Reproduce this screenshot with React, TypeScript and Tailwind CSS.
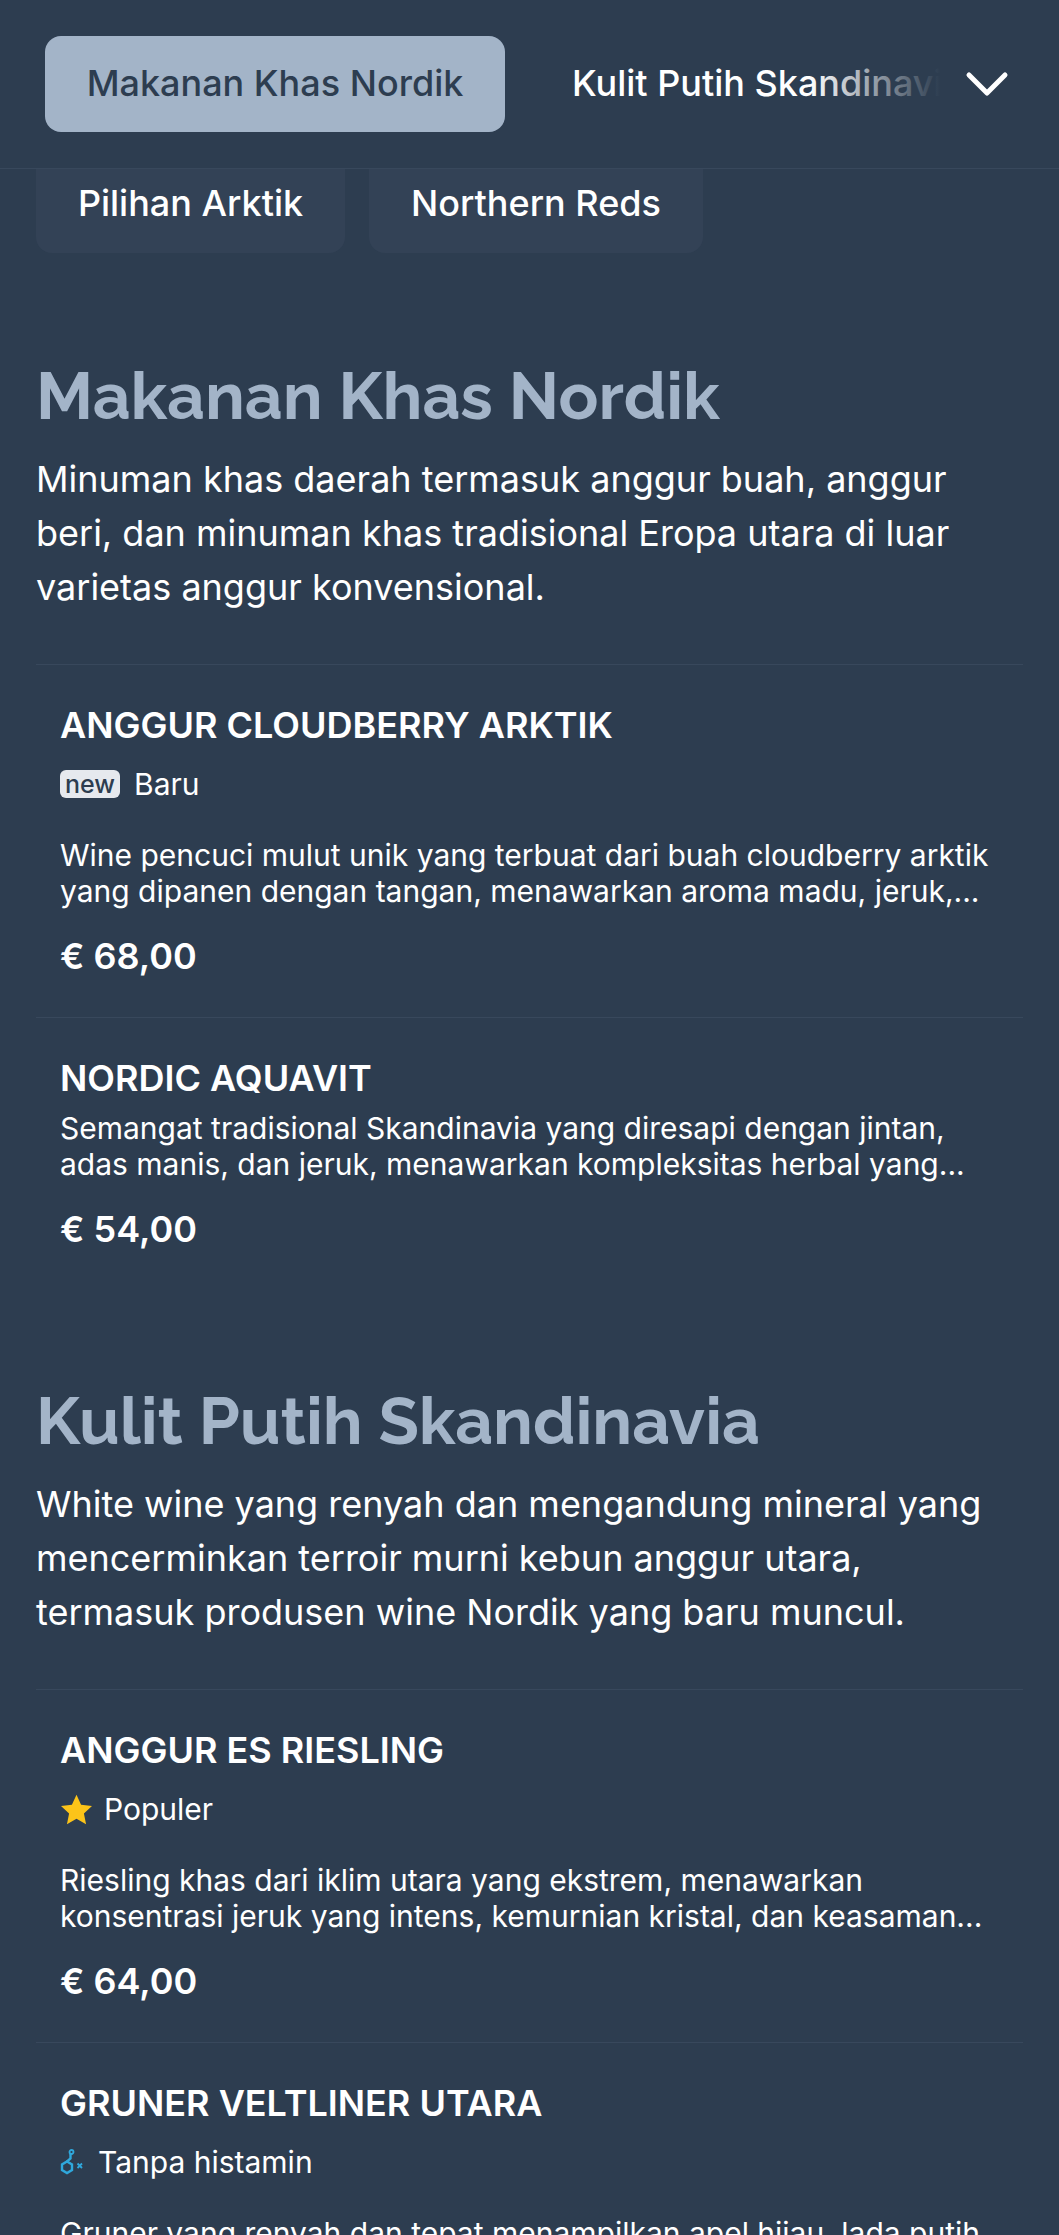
const headingFont = "font-['Raleway','Lato','Inter',sans-serif]";

type Item = {
  name: string;
  tag?: "new" | "star" | "histamine";
  tagLabel?: string;
  desc: string;
  price?: string;
};

const nordic: Item[] = [
  {
    name: "ANGGUR CLOUDBERRY ARKTIK",
    tag: "new",
    tagLabel: "Baru",
    desc: "Wine pencuci mulut unik yang terbuat dari buah cloudberry arktik yang dipanen dengan tangan, menawarkan aroma madu, jeruk,...",
    price: "€ 68,00",
  },
  {
    name: "NORDIC AQUAVIT",
    desc: "Semangat tradisional Skandinavia yang diresapi dengan jintan, adas manis, dan jeruk, menawarkan kompleksitas herbal yang...",
    price: "€ 54,00",
  },
];

const whites: Item[] = [
  {
    name: "ANGGUR ES RIESLING",
    tag: "star",
    tagLabel: "Populer",
    desc: "Riesling khas dari iklim utara yang ekstrem, menawarkan konsentrasi jeruk yang intens, kemurnian kristal, dan keasaman...",
    price: "€ 64,00",
  },
  {
    name: "GRUNER VELTLINER UTARA",
    tag: "histamine",
    tagLabel: "Tanpa histamin",
    desc: "Gruner yang renyah dan tepat menampilkan apel hijau, lada putih, dan mineralitas yang...",
  },
];

function HistamineIcon() {
  return (
    <svg width="24" height="26" viewBox="0 0 24 26" fill="none" stroke="#2fa8dc" strokeWidth="2.4">
      <path d="M7 12.5 12 15.5V21L7 24 2 21V15.5Z" />
      <path d="M7 12.5 10.5 9.5V5" />
      <circle cx="11.5" cy="3" r="2" strokeWidth="1.8" />
      <path d="M17.5 14.5 22 19M22 14.5 17.5 19" strokeWidth="1.8" />
    </svg>
  );
}

function Tag({ item }: { item: Item }) {
  if (!item.tag) {
    return null;
  }

  return (
    <div className="mt-[19px] mb-[35px] flex h-[36px] items-center text-[30px] text-white">
      {item.tag === "new" ? (
        <span className="mr-[14px] flex h-[28px] w-[60px] items-center justify-center rounded-[6px] bg-[#e6e9ee] text-[25px] leading-none font-medium text-[#2d3d50]">
          new
        </span>
      ) : null}
      {item.tag === "star" ? (
        <svg width="33" height="31" viewBox="0 0 24 23" className="mr-[11px]" fill="#fcc419">
          <path d="M12 0.5 15.4 8 23.5 8.9 17.5 14.4 19.1 22.4 12 18.4 4.9 22.4 6.5 14.4 0.5 8.9 8.6 8Z" />
        </svg>
      ) : null}
      {item.tag === "histamine" ? (
        <span className="mr-[14px]">
          <HistamineIcon />
        </span>
      ) : null}
      <span>{item.tagLabel}</span>
    </div>
  );
}

function MenuItem({ item }: { item: Item }) {
  return (
    <article className="border-t border-[#38485c] px-[24px] pt-[39px] pb-[39px]">
      <h3 className="mb-[10px] text-[36px] leading-[43px] font-semibold text-white">{item.name}</h3>
      <Tag item={item} />
      <p className="text-[30px] leading-[36px] text-white">{item.desc}</p>
      {item.price ? (
        <p className="mt-[25px] text-[36px] leading-[44px] font-semibold text-white">{item.price}</p>
      ) : null}
    </article>
  );
}

function Section({ title, intro, items }: { title: string; intro: string; items: Item[] }) {
  return (
    <section className="mb-[91px]">
      <h2 className={`text-[66px] leading-[80px] font-bold text-[#a3b4c8] ${headingFont}`}>{title}</h2>
      <p className="mt-[16px] mb-[50px] text-[36px] leading-[54px] text-white">{intro}</p>
      {items.map((item) => (
        <MenuItem key={item.name} item={item} />
      ))}
    </section>
  );
}

export default function App() {
  return (
    <div className="h-[2235px] overflow-hidden bg-[#2d3d50] font-['Inter',sans-serif]">
      <header className="flex h-[169px] items-center border-b border-[#38485c] pb-[1px]">
        <div className="ml-[45px] flex h-[96px] w-[460px] items-center justify-center rounded-[16px] bg-[#a3b4c8] pb-[2px] text-[36px] font-medium text-[#2d3d50]">
          Makanan Khas Nordik
        </div>
        <div className="relative mb-[2px] ml-[67px] w-[368px] overflow-hidden text-[36px] font-medium whitespace-nowrap text-white">
          Kulit Putih Skandinavia
          <span className="absolute inset-y-0 right-0 w-[130px] bg-gradient-to-r from-transparent to-[#2d3d50]" />
        </div>
        <svg width="46" height="30" viewBox="0 0 46 30" fill="none" className="ml-[24px]">
          <path d="M5 6 23 24 41 6" stroke="white" strokeWidth="5" strokeLinecap="round" strokeLinejoin="round" />
        </svg>
      </header>

      <nav className="flex gap-[24px] pl-[36px] text-[36px] font-medium text-white">
        <span className="flex h-[84px] w-[309px] items-center justify-center rounded-b-[16px] bg-[#334256] pb-[16px]">
          Pilihan Arktik
        </span>
        <span className="flex h-[84px] w-[334px] items-center justify-center rounded-b-[16px] bg-[#334256] pb-[16px]">
          Northern Reds
        </span>
      </nav>

      <main className="mt-[103px] px-[36px]">
        <Section
          title="Makanan Khas Nordik"
          intro="Minuman khas daerah termasuk anggur buah, anggur beri, dan minuman khas tradisional Eropa utara di luar varietas anggur konvensional."
          items={nordic}
        />
        <Section
          title="Kulit Putih Skandinavia"
          intro="White wine yang renyah dan mengandung mineral yang mencerminkan terroir murni kebun anggur utara, termasuk produsen wine Nordik yang baru muncul."
          items={whites}
        />
      </main>
    </div>
  );
}
